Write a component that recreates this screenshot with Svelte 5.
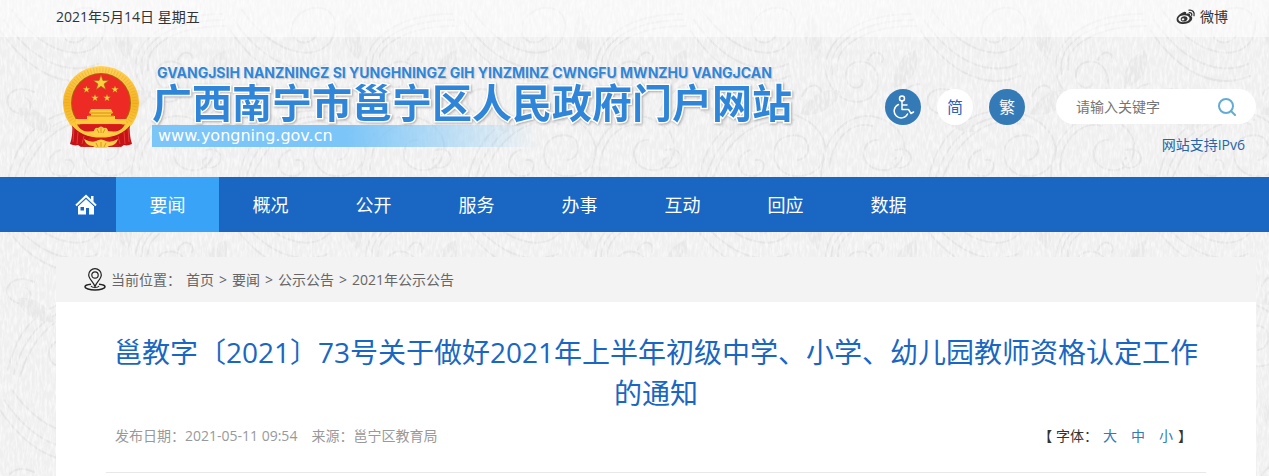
<script>
  const navItems = ['要闻', '概况', '公开', '服务', '办事', '互动', '回应', '数据'];
  const crumbs = ['首页', '要闻', '公示公告', '2021年公示公告'];
  const sizes = ['大', '中', '小'];

  let active = $state('要闻');
  let keyword = $state('');
</script>

<div class="page">
  <svg class="wallpaper" aria-hidden="true">
    <defs>
      <pattern id="swirls" width="230" height="190" patternUnits="userSpaceOnUse">
        <g fill="none" stroke="#e4e4e4" stroke-width="2" stroke-linecap="round">
          <path d="M8 180C20 120 70 100 108 116s34 56 4 60-38-34-14-40 26 22 10 24" />
          <path d="M20 186C36 134 74 114 100 124M14 184C28 128 72 108 104 120" />
          <path d="M12 10C48 62 96 62 104 34S80 0 66 18s8 34 20 18" />
          <path d="M0 30c30 44 66 60 100 46M4 20c30 44 66 56 94 44" />
          <path d="M222 14c-62 0-96 34-84 66s52 26 50 0-34-22-32-4 20 12 16 4" />
          <path d="M226 26c-48 0-82 18-78 44M224 20c-54 0-88 24-82 54" />
          <path d="M132 186c-6-46 28-82 62-66s20 54-4 50-18-32-2-30" />
          <path d="M140 170c0-30 22-50 42-44M200 110c10-18 20-26 30-26M206 120c10-14 16-16 24-16" />
          <path d="M34 92c-22-10-34 8-22 18s26-4 14-12M112 96c8-18 24-10 18 2" />
          <path d="M60 150c-14 4-16 24 0 26s18-18 6-16M178 60c4-12 18-8 14 2M206 150c14-4 20 10 10 16s-18-4-10-8" />
        </g>
        <g fill="#e8e8e8">
          <path d="M110 114c10-22 30-28 42-22-8 16-24 26-42 22zM128 60c-16-14-18-34-8-46 12 12 16 30 8 46zM54 132c-22 0-34-10-36-24 16-2 32 8 36 24zM204 88c-2-20 8-34 22-38 4 18-4 34-22 38z" />
        </g>
      </pattern>
      <filter id="grain" x="0" y="0" width="100%" height="100%">
        <feTurbulence type="fractalNoise" baseFrequency="0.4 0.12" numOctaves="2" seed="4" />
        <feColorMatrix values="0 0 0 0 1  0 0 0 0 1  0 0 0 0 1  2.6 0 0 0 -1" />
      </filter>
    </defs>
    <rect width="100%" height="100%" fill="#efefef" />
    <rect width="100%" height="100%" fill="url(#swirls)" />
    <rect width="100%" height="100%" filter="url(#grain)" opacity="0.6" />
  </svg>

  <div class="topbar">
    <div class="wrap topbar-inner">
      <span>2021年5月14日 星期五</span>
      <a class="weibo" href="#weibo">
        <svg width="20" height="16" viewBox="0 0 20 16" aria-hidden="true">
          <path fill="#333" fill-rule="evenodd" d="M8 3C9.500 2.500 10.600 3.200 10.200 5c2.200-.8 4.200-.5 3.900 1.600 1.600.6 2.300 1.500 2.100 3C15.800 12.800 12 15 7.600 15 3.500 15 .6 13.200.6 10.400.6 7.400 4.500 4 8 3zm-.2 3.200c-3.200.2-5.600 2-5.400 4 .2 2 2.700 3.200 5.800 2.900 3.200-.3 5.500-2 5.300-4-.2-2-2.600-3.100-5.700-2.900z" />
          <path fill="#333" fill-rule="evenodd" d="M8.300 7.200c2.100 0 3.500 1.200 3.200 2.800-.3 1.500-2 2.700-3.900 2.600-2-.1-3.200-1.300-2.900-2.900.3-1.500 1.800-2.500 3.600-2.500zm-1.300 2c-.9.1-1.400.8-1.200 1.500.2.600.9.900 1.700.6.800-.3 1.100-1 .8-1.500-.2-.5-.7-.7-1.300-.6z" />
          <path fill="none" stroke="#333" stroke-width="1.300" stroke-linecap="round" d="M13 1.200c3.500-.6 6 2.100 5 5.500M13.300 3.700c1.700-.3 2.900 1 2.400 2.700" />
        </svg>
        微博
      </a>
    </div>
  </div>

  <header class="wrap header">
    <a class="brand" href="#home">
      <svg class="emblem" viewBox="0 0 78 84" aria-hidden="true">
        <defs>
          <linearGradient id="gold" x1="0" y1="0" x2="0" y2="1">
            <stop offset="0" stop-color="#ffd35a" />
            <stop offset="0.5" stop-color="#f5b324" />
            <stop offset="1" stop-color="#ffd84e" />
          </linearGradient>
          <path id="star" d="M0-10 2.400-3.200 9.500-3.100 3.800 1.200 5.900 8.100 0 4-5.900 8.100-3.800 1.200-9.500-3.100-2.400-3.200z" />
        </defs>
        <ellipse cx="39" cy="38" rx="38" ry="37" fill="url(#gold)" />
        <ellipse cx="39" cy="38" rx="34" ry="33" fill="none" stroke="#d99a1b" stroke-width="5" stroke-dasharray="1 2" opacity="0.35" />
        <circle cx="39" cy="38" r="30" fill="#a8660d" />
        <circle cx="39" cy="38" r="29" fill="#ee2a25" />
        <g fill="#ffcf3d" stroke="#a06a10" stroke-width="0.800">
          <use href="#star" transform="translate(39 18) scale(.8)" />
          <use href="#star" transform="translate(24.500 24.500) scale(.38)" />
          <use href="#star" transform="translate(53 24.500) scale(.38)" />
          <use href="#star" transform="translate(33 33) scale(.38)" />
          <use href="#star" transform="translate(45 33) scale(.38)" />
        </g>
        <path fill="#ffc93c" d="M29 44h20l2 4-2 1v2h4v3h11v5H14v-5h11v-3h4v-2l-2-1z" />
        <path stroke="#d78e19" d="M28 48h22M26 51h26" />
        <path fill="#d21b1b" d="M15 59.500h48l-5 7H20z" />
        <path fill="#c41217" d="M10 58c5 7 13 12 23 14-2 5-8 9-14 10l-3-2c-3 1-5 0-8-1 2-6 3-14 2-21zM68 58c-5 7-13 12-23 14 2 5 8 9 14 10l3-2c3 1 5 0 8-1-2-6-3-14-2-21z" />
        <path fill="none" stroke="#ea3a35" d="M12 63l-1 14M16 67l-1 12M66 63l1 14M62 67l1 12M22 71l-2 8M56 71l2 8" />
        <path fill="#d21b1b" d="M28 72h22l8 10H20z" />
        <path fill="none" stroke="#ffc93c" stroke-width="3" d="M10 58c6 8 16 13 29 13s23-5 29-13" />
        <path fill="#ffd047" d="M32 66q1-4 4-3 3-3 6 0 3-1 4 3l5 1q-4 5-12 4-8 1-12-4z" />
        <path fill="#ffd047" d="M22 74q7 4 12 2 5-3 10 0 5 2 12-2-2 7-9 7l-3 2H34l-3-2q-7 0-9-7z" />
        <path fill="none" stroke="#c98516" stroke-width="0.800" d="M39 63v5M35 64l2 4M43 64l-2 4M39 77v5M34 78l2 4M44 78l-2 4" />
      </svg>
      <span class="brand-text">
        <span class="latin">GVANGJSIH NANZNINGZ SI YUNGHNINGZ GIH YINZMINZ CWNGFU MWNZHU VANGJCAN</span>
        <span class="name">广西南宁市邕宁区人民政府门户网站</span>
        <span class="domain">www.yongning.gov.cn</span>
      </span>
    </a>

    <div class="tools">
      <button class="round" type="button" aria-label="无障碍">
        <svg width="24" height="24" viewBox="0 0 24 24" fill="none" stroke="#fff" stroke-width="1.500" stroke-linecap="round" stroke-linejoin="round" aria-hidden="true">
          <circle cx="11" cy="3.500" r="2.500" />
          <path d="M11 6v8.500h6.500l2.500 4 2.500-1.500M11 10h5M7.500 9.500a7 7 0 1 0 9 9.500" />
        </svg>
      </button>
      <button class="round light" type="button">简</button>
      <button class="round" type="button">繁</button>
    </div>

    <div class="search-side">
      <form class="search" onsubmit={(e) => e.preventDefault()}>
        <input type="text" aria-label="请输入关键字" placeholder="请输入关键字" bind:value={keyword} />
        <button type="submit" aria-label="搜索">
          <svg width="18" height="18" viewBox="0 0 18 18" fill="none" stroke="#62abd3" stroke-width="2" stroke-linecap="round" aria-hidden="true">
            <circle cx="8" cy="8" r="7" />
            <path d="M13 13l4 4" />
          </svg>
        </button>
      </form>
      <a class="ipv6" href="#ipv6">网站支持IPv6</a>
    </div>
  </header>

  <nav class="nav">
    <div class="wrap nav-inner">
      <a class="home" href="#home" aria-label="首页">
        <svg width="22" height="21" viewBox="0 0 22 21" aria-hidden="true">
          <path fill="#fff" fill-rule="evenodd" d="M11 4.500 19 12v8.500h-5V14h-3v6.500H3V12zM5.500 13v3.500H9V13z" />
          <path fill="none" stroke="#fff" stroke-width="2" d="M1 11.500 11 2l10 9.500" />
          <path fill="#fff" d="M16 2h2.500v6L16 5.500z" />
          <path fill="none" stroke="#1967c2" stroke-width="1" d="M2.500 12.500 11 4.500l8.500 8" />
        </svg>
      </a>
      {#each navItems as item}
        <a class="nav-item" class:active={item === active} href="#{item}" onclick={() => (active = item)}>{item}</a>
      {/each}
    </div>
  </nav>

  <main class="wrap panel">
    <div class="crumbs">
      <svg width="22" height="23" viewBox="0 0 22 23" fill="none" stroke="#222" aria-hidden="true">
        <path stroke-width="1.500" d="M7 16.300c-3.500.3-6 1.200-6 2.500C1 20.500 5.500 22 11 22s10-1.500 10-3.200c0-1.300-2.500-2.200-6-2.500" />
        <path stroke-width="1.200" d="M11 18.500C9.500 14 4.700 11 4.700 7a6.300 6.300 0 0 1 12.600 0c0 4-4.800 7-6.300 11.500zM7 18c1 2 7 2 8 0" />
        <circle cx="11" cy="7" r="3.200" stroke-width="1.200" />
      </svg>
      <span class="where">当前位置：</span>
      {#each crumbs as crumb, i}
        {#if i > 0}<span>&gt;</span>{/if}
        <a href="#{crumb}">{crumb}</a>
      {/each}
    </div>

    <article>
      <h1>邕教字〔2021〕73号关于做好2021年上半年初级中学、小学、幼儿园教师资格认定工作的通知</h1>
      <div class="meta">
        <div class="source">
          <span>发布日期：2021-05-11 09:54</span>
          <span>来源：邕宁区教育局</span>
        </div>
        <div class="font-size">
          <span>【 字体：</span>
          <span class="sizes">
            {#each sizes as size}
              <button type="button">{size}</button>
            {/each}
          </span>
          <span>】</span>
        </div>
      </div>
    </article>
  </main>
</div>

<style>
  :global(body) {
    margin: 0;
  }
  .page {
    position: relative;
    isolation: isolate;
    display: flex;
    flex-direction: column;
    min-height: 100vh;
    overflow: hidden;
    font: 14px/20px "Open Sans", "Noto Sans CJK SC", sans-serif;
    color: #333;
  }
  .wallpaper {
    position: absolute;
    inset: 0;
    z-index: -1;
    width: 100%;
    height: 100%;
  }
  a {
    color: inherit;
    text-decoration: none;
  }
  button {
    padding: 0;
    border: 0;
    background: none;
    font: inherit;
    cursor: pointer;
  }
  .wrap {
    margin: 0 13px 0 56px;
  }

  .topbar {
    background: rgba(255, 255, 255, 0.5);
  }
  .topbar-inner {
    display: flex;
    justify-content: space-between;
    height: 37px;
    padding-right: 28px;
    line-height: 34px;
  }
  .weibo {
    display: flex;
    align-items: center;
    gap: 4px;
    height: 34px;
  }

  .header {
    display: flex;
    height: 140px;
  }
  .brand {
    display: flex;
    align-items: flex-start;
    gap: 12px;
    padding: 28px 0 0 6px;
  }
  .emblem {
    width: 78px;
    height: 84px;
    flex: none;
  }
  .brand-text {
    display: flex;
    flex-direction: column;
    color: #2f86d9;
    white-space: nowrap;
  }
  .latin {
    padding-left: 5px;
    font: bold 14px/16px Inter, "Liberation Sans", sans-serif;
    text-shadow: 0 0 2px #fff, 1px 1px 1px #bbb;
  }
  .name {
    padding-bottom: 4px;
    font-size: 40px;
    font-weight: 700;
    line-height: 40px;
    font-family: "Noto Sans CJK SC", sans-serif;
    -webkit-text-stroke: 3px #fff;
    paint-order: stroke fill;
    filter: drop-shadow(1px 1px 1px #aaa);
  }
  .domain {
    width: 380px;
    padding-left: 6px;
    background: linear-gradient(90deg, #7bc5f8 50%, transparent);
    color: #fff;
    font: 16px/22px "DejaVu Sans", sans-serif;
  }

  .tools {
    display: flex;
    gap: 16px;
    margin: 52px 31px 0 auto;
  }
  .round {
    display: flex;
    align-items: center;
    justify-content: center;
    width: 36px;
    height: 36px;
    border-radius: 50%;
    background: #337ab7;
    color: #fff;
    font-size: 16px;
  }
  .round.light {
    background: #fff;
    color: #2a62b8;
  }
  .search-side {
    display: flex;
    flex-direction: column;
    align-items: flex-end;
    width: 200px;
    padding-top: 52px;
  }
  .search {
    display: flex;
    align-items: center;
    width: 100%;
    height: 35px;
    padding: 0 20px;
    box-sizing: border-box;
    border-radius: 18px;
    background: #fff;
  }
  .search input {
    flex: 1;
    min-width: 0;
    padding: 0;
    border: 0;
    outline: 0;
    background: none;
    font: inherit;
  }
  .search input::placeholder {
    color: #757575;
  }
  .search svg {
    display: block;
  }
  .ipv6 {
    margin: 11px 11px 0 0;
    color: #2665a8;
  }

  .nav {
    background: #1967c2;
    color: #fff;
    font-size: 18px;
  }
  .nav-inner {
    display: flex;
    height: 55px;
  }
  .home,
  .nav-item {
    display: flex;
    align-items: center;
    justify-content: center;
    width: 103px;
  }
  .home {
    width: 60px;
  }
  .nav-item.active {
    background: #39a4f7;
  }

  .panel {
    flex: 1;
    margin-top: 25px;
    background: #fff;
  }
  .crumbs {
    display: flex;
    align-items: center;
    gap: 5px;
    height: 45px;
    padding: 0 28px;
    background: #f3f3f3;
    color: #666;
  }
  article {
    margin: 0 50px;
    padding-top: 30px;
    border-bottom: 1px solid #e8e8e8;
  }
  h1 {
    margin: 0;
    color: #1967c2;
    font-size: 28px;
    font-weight: 400;
    line-height: 41px;
    text-align: center;
  }
  .meta {
    display: flex;
    justify-content: space-between;
    padding: 12px 14px 26px 9px;
  }
  .source {
    display: flex;
    gap: 14px;
    color: #999;
  }
  .font-size {
    display: flex;
    gap: 5px;
  }
  .sizes {
    display: flex;
    gap: 14px;
    color: #337ab7;
  }
  .sizes button {
    color: inherit;
  }
</style>
